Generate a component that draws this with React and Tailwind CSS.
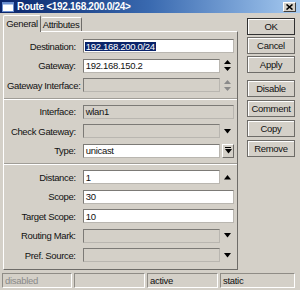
import React from 'react';

const FONT = { fontFamily: '"Liberation Sans", Arial, sans-serif' };

function UpDown({ gray }) {
  const c = gray ? '#8a8a8a' : '#000';
  return (
    <svg width="7" height="11" viewBox="0 0 7 11">
      <path d="M3.5 0 L7 4 L0 4 Z" fill={c} />
      <path d="M0 7 L7 7 L3.5 11 Z" fill={c} />
    </svg>
  );
}

function Down() {
  return (
    <svg width="7" height="5" viewBox="0 0 7 5">
      <path d="M0 0 L7 0 L3.5 4.5 Z" fill="#000" />
    </svg>
  );
}

function Up() {
  return (
    <svg width="7" height="5" viewBox="0 0 7 5">
      <path d="M3.5 0 L7 4.5 L0 4.5 Z" fill="#000" />
    </svg>
  );
}

function Field({ label, value, disabled, icon, combo, selected }) {
  const short = icon || combo;
  return (
    <div className="flex items-center h-[14.5px]">
      <div className="w-[70px] text-right text-[9.5px] tracking-[-0.35px] leading-none whitespace-nowrap pr-[1px] text-[#111]">{label}</div>
      <div
        className={
          'ml-[6px] h-[14px] flex items-center px-[2px] text-[9.5px] tracking-[-0.3px] leading-none whitespace-nowrap border border-t-[#7c7a76] border-l-[#7c7a76] border-b-[#b9b6b0] border-r-[#b9b6b0] ' +
          (disabled ? 'bg-[#d4d0c8] ' : 'bg-white ') +
          (short ? 'w-[138px]' : 'w-[152px]')
        }
      >
        {selected ? (
          <span className="bg-[#0a246a] text-white px-[1px] -ml-[1px]">{value}</span>
        ) : (
          <span className="text-[#111]">{value}</span>
        )}
      </div>
      {icon && <div className="w-[14px] flex justify-center">{icon}</div>}
      {combo && (
        <div className="ml-[2px] w-[12px] h-[14px] flex flex-col items-center justify-center bg-[#d4d0c8] border border-t-white border-l-white border-b-[#6e6c68] border-r-[#6e6c68]">
          <div className="w-[6px] h-[1px] bg-black mb-[1px]" />
          <Down />
        </div>
      )}
    </div>
  );
}

function Sep() {
  return (
    <div className="h-[2px] -mx-[3px] border-t border-t-[#a09d97] border-b border-b-white" />
  );
}

function Btn({ children, def, className = '' }) {
  return (
    <div
      className={
        'h-[17px] w-[48px] flex items-center justify-center text-[9.5px] tracking-[-0.3px] leading-none text-[#111] bg-[#d4d0c8] border ' +
        (def ? 'border-[#303030] ' : 'border-[#6e6c68] ') +
        'shadow-[inset_1px_1px_0_#fff] ' +
        className
      }
    >
      {children}
    </div>
  );
}

function Cell({ children, w, gray }) {
  return (
    <div
      className={
        'h-[15px] flex items-center px-[2px] text-[9.5px] tracking-[-0.3px] leading-none border border-t-[#8f8c86] border-l-[#8f8c86] border-b-white border-r-white ' +
        (gray ? 'text-[#8a8a8a] ' : 'text-[#111] ') +
        w
      }
    >
      {children}
    </div>
  );
}

export default function App() {
  return (
    <div className="w-[300px] h-[290px] bg-[#d4d0c8] flex flex-col overflow-hidden" style={FONT}>
      {/* title bar */}
      <div className="h-[13px] flex items-center bg-gradient-to-r from-[#0a246a] via-[#3a6ab0] to-[#a6caf0] pl-[2px] pr-[4px]">
        <svg width="12" height="10" viewBox="0 0 12 10">
          <rect x="0.5" y="0.5" width="11" height="9" fill="#fff" stroke="#6b8fd0" />
          <rect x="0.5" y="0.5" width="11" height="2" fill="#6b8fd0" />
        </svg>
        <span className="ml-[3px] text-white font-bold text-[10px] tracking-[-0.3px] leading-none whitespace-nowrap">Route &lt;192.168.200.0/24&gt;</span>
        <div className="ml-auto w-[13px] h-[10px] flex items-center justify-center bg-[#d4d0c8] border border-t-white border-l-white border-b-[#404040] border-r-[#404040]">
          <svg width="7" height="6" viewBox="0 0 7 6">
            <path d="M0.5 0.5 L6.5 5.5 M6.5 0.5 L0.5 5.5" stroke="#000" strokeWidth="1.6" />
          </svg>
        </div>
      </div>

      <div className="flex">
        {/* left column */}
        <div className="ml-[3px] w-[235px] flex flex-col">
          <div className="flex items-end h-[18px] pt-[1px]">
            <div className="h-[17px] w-[38px] flex items-center justify-center text-[9.5px] tracking-[-0.3px] leading-none whitespace-nowrap text-[#111] border border-b-0 border-t-white border-l-white border-r-[#6e6c68] rounded-t-[2px] relative z-10 -mb-[1px] bg-[#d4d0c8]">
              General
            </div>
            <div className="h-[14px] w-[41px] flex items-center justify-center text-[9.5px] tracking-[-0.35px] leading-none whitespace-nowrap text-[#111] border border-b-0 border-l-0 border-t-white border-r-[#6e6c68] rounded-t-[2px]">
              Attributes
            </div>
          </div>
          <div className="h-[239px] border border-t-white border-l-white border-b-[#6e6c68] border-r-[#6e6c68] px-[3px] pt-[7px] flex flex-col gap-[5px]">
            <Field label="Destination:" value="192.168.200.0/24" selected />
            <Field label="Gateway:" value="192.168.150.2" icon={<UpDown />} />
            <Field label="Gateway Interface:" value="" disabled icon={<UpDown gray />} />
            <Sep />
            <Field label="Interface:" value="wlan1" disabled />
            <Field label="Check Gateway:" value="" disabled icon={<Down />} />
            <Field label="Type:" value="unicast" combo />
            <Sep />
            <Field label="Distance:" value="1" icon={<Up />} />
            <Field label="Scope:" value="30" />
            <Field label="Target Scope:" value="10" />
            <Field label="Routing Mark:" value="" disabled icon={<Down />} />
            <Field label="Pref. Source:" value="" disabled icon={<Down />} />
          </div>
        </div>

        {/* buttons */}
        <div className="ml-[9px] flex flex-col pt-[5px]">
          <Btn def>OK</Btn>
          <Btn className="mt-[2px]">Cancel</Btn>
          <Btn className="mt-[2px]">Apply</Btn>
          <Btn className="mt-[7px]">Disable</Btn>
          <Btn className="mt-[3px]">Comment</Btn>
          <Btn className="mt-[3px]">Copy</Btn>
          <Btn className="mt-[3px]">Remove</Btn>
        </div>
      </div>

      {/* status bar */}
      <div className="mt-[3px] flex gap-[2px] pl-[2px]">
        <Cell w="w-[70px]" gray>disabled</Cell>
        <Cell w="w-[71px]"></Cell>
        <Cell w="w-[71px]">active</Cell>
        <Cell w="w-[75px]">static</Cell>
      </div>
    </div>
  );
}
